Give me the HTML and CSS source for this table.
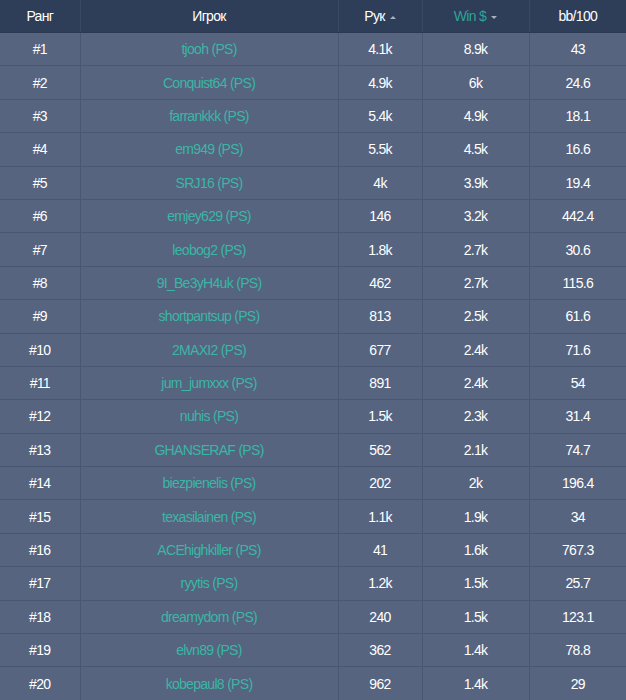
FILE: index.html
```html
<!DOCTYPE html>
<html>
<head>
<meta charset="utf-8">
<link rel="stylesheet" href="styles.css">
</head>
<body>
<table class="rank">
<colgroup><col class="c1"><col class="c2"><col class="c3"><col class="c4"><col class="c5"></colgroup>
<thead>
<tr><th>Ранг</th><th>Игрок</th><th>Рук<span class="caret up"></span></th><th class="active">Win $<span class="caret down"></span></th><th>bb/100</th></tr>
</thead>
<tbody>
<tr><td>#1</td><td class="p">tjooh (PS)</td><td>4.1k</td><td>8.9k</td><td>43</td></tr>
<tr><td>#2</td><td class="p">Conquist64 (PS)</td><td>4.9k</td><td>6k</td><td>24.6</td></tr>
<tr><td>#3</td><td class="p">farrankkk (PS)</td><td>5.4k</td><td>4.9k</td><td>18.1</td></tr>
<tr><td>#4</td><td class="p">em949 (PS)</td><td>5.5k</td><td>4.5k</td><td>16.6</td></tr>
<tr><td>#5</td><td class="p">SRJ16 (PS)</td><td>4k</td><td>3.9k</td><td>19.4</td></tr>
<tr><td>#6</td><td class="p">emjey629 (PS)</td><td>146</td><td>3.2k</td><td>442.4</td></tr>
<tr><td>#7</td><td class="p">leobog2 (PS)</td><td>1.8k</td><td>2.7k</td><td>30.6</td></tr>
<tr><td>#8</td><td class="p">9I_Be3yH4uk (PS)</td><td>462</td><td>2.7k</td><td>115.6</td></tr>
<tr><td>#9</td><td class="p">shortpantsup (PS)</td><td>813</td><td>2.5k</td><td>61.6</td></tr>
<tr><td>#10</td><td class="p">2MAXI2 (PS)</td><td>677</td><td>2.4k</td><td>71.6</td></tr>
<tr><td>#11</td><td class="p">jum_jumxxx (PS)</td><td>891</td><td>2.4k</td><td>54</td></tr>
<tr><td>#12</td><td class="p">nuhis (PS)</td><td>1.5k</td><td>2.3k</td><td>31.4</td></tr>
<tr><td>#13</td><td class="p">GHANSERAF (PS)</td><td>562</td><td>2.1k</td><td>74.7</td></tr>
<tr><td>#14</td><td class="p">biezpienelis (PS)</td><td>202</td><td>2k</td><td>196.4</td></tr>
<tr><td>#15</td><td class="p">texasilainen (PS)</td><td>1.1k</td><td>1.9k</td><td>34</td></tr>
<tr><td>#16</td><td class="p">ACEhighkiller (PS)</td><td>41</td><td>1.6k</td><td>767.3</td></tr>
<tr><td>#17</td><td class="p">ryytis (PS)</td><td>1.2k</td><td>1.5k</td><td>25.7</td></tr>
<tr><td>#18</td><td class="p">dreamydom (PS)</td><td>240</td><td>1.5k</td><td>123.1</td></tr>
<tr><td>#19</td><td class="p">elvn89 (PS)</td><td>362</td><td>1.4k</td><td>78.8</td></tr>
<tr><td>#20</td><td class="p">kobepaul8 (PS)</td><td>962</td><td>1.4k</td><td>29</td></tr>
</tbody>
</table>
</body>
</html>
```
FILE: styles.css
```css
html, body {
  margin: 0;
  padding: 0;
  background: #56647f;
}
.rank {
  width: 626px;
  border-collapse: collapse;
  table-layout: fixed;
  font-family: "Liberation Sans", Arial, sans-serif;
  font-size: 14px;
  letter-spacing: -0.7px;
  color: #ffffff;
}
.c1 { width: 80px; }
.c2 { width: 258px; }
.c3 { width: 84px; }
.c4 { width: 107px; }
.c5 { width: 97px; }
.rank th {
  background: #2e3d58;
  font-weight: normal;
  height: 32px;
  padding: 0;
  text-align: center;
  border-left: 1px solid #3a4862;
  border-bottom: 1px solid #2b3852;
}
.rank th:first-child, .rank td:first-child { border-left: none; }
.rank th.active { color: #2aa59a; }
.rank td {
  height: 32.4px;
  padding: 0;
  text-align: center;
  border-left: 1px solid #4a5773;
  border-top: 1px solid #4a5773;
  background: #56647f;
}
.rank tbody tr:first-child td { border-top: none; }
.rank td.p { color: #3bb6a5; }
.caret {
  display: inline-block;
  width: 0;
  height: 0;
  margin-left: 5px;
  vertical-align: middle;
  border-left: 3px solid transparent;
  border-right: 3px solid transparent;
}
.caret.up { border-bottom: 3px solid #a8b0c0; }
.caret.down { border-top: 3px solid #a8b0c0; }
```
